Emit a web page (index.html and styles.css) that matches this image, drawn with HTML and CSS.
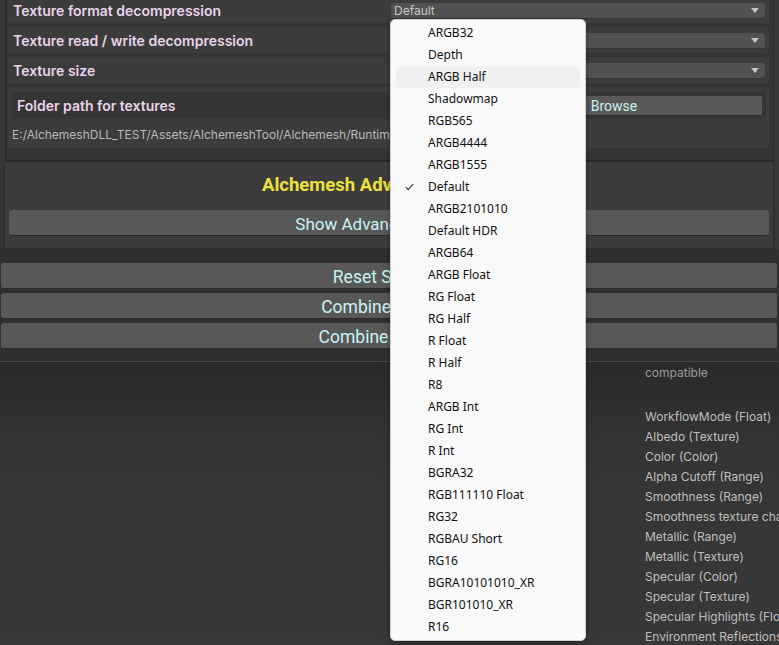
FILE: index.html
```html
<!DOCTYPE html>
<html>
<head>
<meta charset="utf-8">
<link rel="stylesheet" href="styles.css">
</head>
<body>
<div class="screen">
  <div class="panel">
    <div class="rows">
      <div class="row"><span class="label">Texture format decompression</span><div class="field"><span class="field-text">Default</span><i class="arrow"></i></div></div>
      <div class="row"><span class="label">Texture read / write decompression</span><div class="field"><span class="field-text"></span><i class="arrow"></i></div></div>
      <div class="row"><span class="label">Texture size</span><div class="field"><span class="field-text"></span><i class="arrow"></i></div></div>
      <div class="folder">
        <div class="folder-head"><span class="label">Folder path for textures</span><div class="browse">Browse</div></div>
        <div class="path">E:/AlchemeshDLL_TEST/Assets/AlchemeshTool/Alchemesh/Runtime/Textures</div>
      </div>
    </div>
  </div>
  <div class="advanced">
    <div class="adv-title">Alchemesh Advanced Settings</div>
    <div class="btn btn-inner">Show Advanced Settings</div>
  </div>
  <div class="actions">
    <div class="btn">Reset Settings</div>
    <div class="btn">Combine Meshes</div>
    <div class="btn">Combine Textures</div>
  </div>
  <div class="lower">
    <div class="props">
      <div class="prop dim">compatible</div>
      <div class="prop spacer"></div>
      <div class="prop">WorkflowMode (Float)</div>
      <div class="prop">Albedo (Texture)</div>
      <div class="prop">Color (Color)</div>
      <div class="prop">Alpha Cutoff (Range)</div>
      <div class="prop">Smoothness (Range)</div>
      <div class="prop">Smoothness texture channel (Float)</div>
      <div class="prop">Metallic (Range)</div>
      <div class="prop">Metallic (Texture)</div>
      <div class="prop">Specular (Color)</div>
      <div class="prop">Specular (Texture)</div>
      <div class="prop">Specular Highlights (Float)</div>
      <div class="prop">Environment Reflections (Float)</div>
    </div>
  </div>

  <div class="menu">
    <div class="item">ARGB32</div>
    <div class="item">Depth</div>
    <div class="item hover">ARGB Half</div>
    <div class="item">Shadowmap</div>
    <div class="item">RGB565</div>
    <div class="item">ARGB4444</div>
    <div class="item">ARGB1555</div>
    <div class="item checked"><svg class="check" width="9" height="8" viewBox="0 0 9 8"><path d="M0.8 4.2 L3.2 6.6 L8.2 1.2" fill="none" stroke="#333" stroke-width="1.1"/></svg>Default</div>
    <div class="item">ARGB2101010</div>
    <div class="item">Default HDR</div>
    <div class="item">ARGB64</div>
    <div class="item">ARGB Float</div>
    <div class="item">RG Float</div>
    <div class="item">RG Half</div>
    <div class="item">R Float</div>
    <div class="item">R Half</div>
    <div class="item">R8</div>
    <div class="item">ARGB Int</div>
    <div class="item">RG Int</div>
    <div class="item">R Int</div>
    <div class="item">BGRA32</div>
    <div class="item">RGB111110 Float</div>
    <div class="item">RG32</div>
    <div class="item">RGBAU Short</div>
    <div class="item">RG16</div>
    <div class="item">BGRA10101010_XR</div>
    <div class="item">BGR101010_XR</div>
    <div class="item">R16</div>
  </div>
</div>
</body>
</html>
```

FILE: styles.css
```css
* { box-sizing: border-box; }
html, body { margin: 0; padding: 0; }
body {
  background: #383838;
  font-family: Inter, "Noto Sans", sans-serif;
  overflow: hidden;
}
.screen {
  position: relative;
  width: 779px;
  height: 645px;
  overflow: hidden;
  background: #383838;
}
.panel {
  margin-top: -3px;
  margin-left: 5px;
  width: 769px;
  background: #353535;
  border-left: 1px solid #272727;
  border-right: 1px solid #2c2c2c;
  border-bottom: 1px solid #262626;
  padding: 0 4px 11px 2px;
  height: 164px;
}
.rows {
  display: flex;
  flex-direction: column;
  gap: 4px;
}
.row {
  height: 26px;
  background: #3c3c3c;
  display: grid;
  grid-template-columns: 378px 1fr;
  align-items: center;
  padding: 0 4px 0 5px;
}
.label {
  color: #ead3ea;
  font-weight: 600;
  font-size: 14px;
  white-space: nowrap;
}
.field {
  height: 16px;
  background: #515151;
  border-radius: 3px;
  border-bottom: 1px solid #353535;
  display: flex;
  align-items: center;
  justify-content: space-between;
  padding: 0 6px 0 3px;
  margin-top: 2px;
}
.field-text {
  color: #c6c6c6;
  font-size: 12px;
  line-height: 15px;
}
.arrow {
  width: 0;
  height: 0;
  border-left: 4px solid transparent;
  border-right: 4px solid transparent;
  border-top: 5px solid #c4c4c4;
}
.folder {
  height: 61px;
  background: #3c3c3c;
  padding: 5px 3px 0 4px;
}
.folder-head {
  height: 27px;
  background: #353535;
  display: flex;
  align-items: center;
  justify-content: space-between;
  padding: 0 4px 0 5px;
}
.browse {
  width: 296px;
  height: 20px;
  background: #585858;
  border-radius: 2px;
  border-bottom: 1px solid #303030;
  color: #c9f1f1;
  font-family: Roboto, sans-serif;
  font-size: 14px;
  line-height: 20px;
  text-align: center;
}
.path {
  color: #b9b9b9;
  font-size: 12px;
  white-space: nowrap;
  overflow: hidden;
  margin-top: 8px;
}
.advanced {
  margin-left: 4px;
  width: 770px;
  height: 88px;
  background: #3c3c3c;
  border: 1px solid #2d2d2d;
  padding: 0 4px;
  display: flex;
  flex-direction: column;
  box-shadow: 0 2px 2px rgba(0,0,0,0.25);
}
.adv-title {
  color: #ece23e;
  font-family: Roboto, sans-serif;
  font-weight: 700;
  font-size: 18.5px;
  text-align: center;
  height: 48px;
  line-height: 46px;
}
.btn {
  height: 26px;
  background: #585858;
  border-radius: 3px;
  border-bottom: 1px solid #2a2a2a;
  color: #c9f3f3;
  font-family: Roboto, sans-serif;
  font-size: 17.5px;
  line-height: 24px;
  padding-top: 2px;
  text-align: center;
  white-space: nowrap;
  overflow: hidden;
}
.btn-inner { font-size: 17px; }
.actions {
  background: #303030;
  padding: 14px 2px 12px 1px;
  display: flex;
  flex-direction: column;
  gap: 4px;
  border-bottom: 1px solid #444;
}
.lower {
  height: 290px;
  background: linear-gradient(#2a2a2a, #353535 90px, #383838);
  padding: 1px 0 0 645px;
}
.props {
  display: flex;
  flex-direction: column;
}
.prop {
  height: 20px;
  line-height: 20px;
  color: #bfbfbf;
  font-size: 12px;
  white-space: nowrap;
}
.prop.dim { color: #999; }
.prop.spacer { height: 24px; }
.menu {
  position: absolute;
  left: 390px;
  top: 19px;
  width: 196px;
  height: 622px;
  background: #f9f9f9;
  border: 1px solid #d0d0d0;
  border-radius: 5px;
  box-shadow: 0 2px 6px rgba(0,0,0,0.35);
  padding: 2px 5px 0 5px;
  font-family: "Noto Sans", sans-serif;
}
.item {
  position: relative;
  height: 22px;
  line-height: 22px;
  font-size: 12px;
  color: #111;
  padding-left: 32px;
  border-radius: 4px;
  white-space: nowrap;
}
.item.hover { background: #f0f0f0; }
.check {
  position: absolute;
  left: 9px;
  top: 7px;
}
```
